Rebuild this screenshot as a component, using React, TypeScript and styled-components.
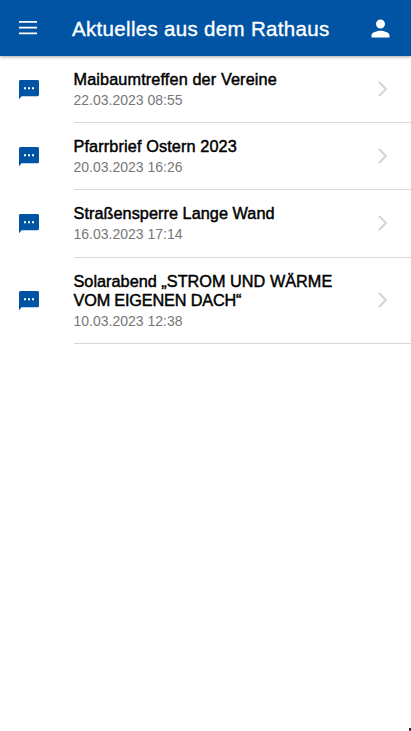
import React from "react";
import styled, { createGlobalStyle } from "styled-components";

const GlobalStyle = createGlobalStyle`
  *{box-sizing:border-box}
  body{margin:0;background:#fff;font-family:"Liberation Sans",Arial,sans-serif;overflow:hidden}
`;
const Screen = styled.main`
  position:relative;width:100%;height:100vh;display:flex;flex-direction:column;background:#fff;
`;
const Header = styled.header`
  height:56px;flex:none;background:#0054a3;color:#fff;display:flex;align-items:center;
  padding:0 17px 0 16px;box-shadow:0 1px 3px rgba(0,0,0,.35);
`;
const IconButton = styled.button`
  border:0;padding:0;background:none;color:inherit;display:flex;
`;
const Title = styled.h1`
  margin:1px 0 0 32px;flex:1;font-size:20.5px;line-height:26px;font-weight:400;white-space:nowrap;
  letter-spacing:.32px;-webkit-text-stroke:.35px currentColor;
`;
const List = styled.ul`list-style:none;margin:0;padding:0;`;
const Row = styled.li<{ $h: number }>`
  height:${(p) => p.$h}px;display:flex;
`;
const Lead = styled.div`
  width:74px;flex:none;padding-left:17px;display:flex;align-items:center;color:#0054a3;
`;
const Body = styled.div`
  flex:1;border-bottom:1px solid #d8d8d8;display:flex;align-items:center;justify-content:space-between;
  padding-right:22px;
`;
const Texts = styled.div`display:flex;flex-direction:column;padding-top:1px;`;
const Headline = styled.div<{ $track: number }>`
  font-size:16.25px;line-height:19px;color:#000;white-space:pre;margin-left:-.5px;
  letter-spacing:${(p) => p.$track}px;-webkit-text-stroke:.45px currentColor;
`;
const DateLine = styled.time`
  margin:1px 0 0 -.5px;font-size:14px;line-height:20px;color:#777;
`;
const CornerMark = styled.i`
  position:absolute;right:0;bottom:0;width:2px;height:3px;
  background:linear-gradient(#26264a 50%,#c8203c 50%);
`;

const items = [
  { lines: [["Maibaumtreffen der Vereine", 0.12]], date: "22.03.2023 08:55", h: 67 },
  { lines: [["Pfarrbrief Ostern 2023", 0.12]], date: "20.03.2023 16:26", h: 67 },
  { lines: [["Straßensperre Lange Wand", 0.05]], date: "16.03.2023 17:14", h: 68 },
  { lines: [["Solarabend „STROM UND WÄRME", 0.02], ["VOM EIGENEN DACH“", -0.17]], date: "10.03.2023 12:38", h: 86 },
] as { lines: [string, number][]; date: string; h: number }[];

const MenuIcon = () => (
  <svg width="24" height="24" viewBox="0 0 24 24" fill="none" stroke="currentColor" strokeWidth="1.7">
    <path d="M3 5.900h18M3 11.600h18M3 17.300h18" />
  </svg>
);
const PersonIcon = () => (
  <svg width="27" height="27" viewBox="0 0 24 24" fill="currentColor">
    <path d="M12 12c2.200 0 4-1.800 4-4s-1.800-4-4-4-4 1.800-4 4 1.800 4 4 4zm0 2c-2.670 0-8 1.340-8 4v2h16v-2c0-2.660-5.330-4-8-4z" />
  </svg>
);
const MessageIcon = () => (
  <svg width="24" height="24" viewBox="0 0 24 24" fill="currentColor">
    <path d="M20.500 2H3.500C2.700 2 2 2.700 2 3.500V21.300L4.600 18.300H20.500c.8 0 1.500-.7 1.500-1.500V3.500C22 2.700 21.300 2 20.500 2zM9 11.200H7V9.300h2v1.900zm4 0h-2V9.300h2v1.900zm4 0h-2V9.300h2v1.900z" />
  </svg>
);
const Chevron = () => (
  <svg width="12" height="19" viewBox="0 0 12 19" fill="none" stroke="#d3d3d5" strokeWidth="2">
    <path d="M2 2l7 7-7 7" />
  </svg>
);

export default function App() {
  return (
    <Screen>
      <GlobalStyle />
      <Header>
        <IconButton aria-label="Menü"><MenuIcon /></IconButton>
        <Title>Aktuelles aus dem Rathaus</Title>
        <IconButton aria-label="Profil"><PersonIcon /></IconButton>
      </Header>
      <List>
        {items.map((it) => (
          <Row key={it.date} $h={it.h}>
            <Lead><MessageIcon /></Lead>
            <Body>
              <Texts>
                {it.lines.map(([text, track]) => <Headline key={text} $track={track}>{text}</Headline>)}
                <DateLine>{it.date}</DateLine>
              </Texts>
              <Chevron />
            </Body>
          </Row>
        ))}
      </List>
      <CornerMark />
    </Screen>
  );
}
